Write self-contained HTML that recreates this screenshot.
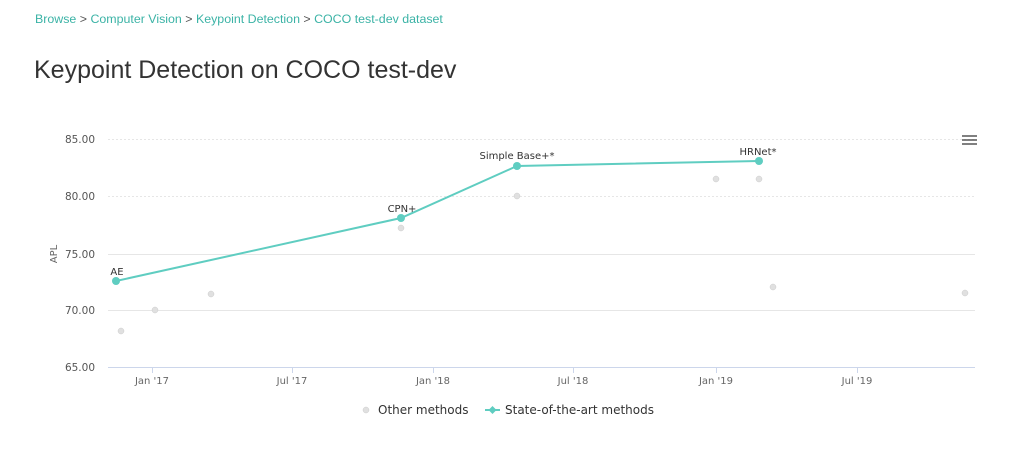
<!DOCTYPE html>
<html><head><meta charset="utf-8"><style>
html,body{margin:0;padding:0;background:#fff;width:1024px;height:449px;overflow:hidden;font-family:"Liberation Sans","DejaVu Sans",sans-serif}
.bc{position:absolute;left:35px;top:12px;font-size:12.4px;color:#555}
.bc a{color:#3bb3a6;text-decoration:none}
h1{position:absolute;left:34px;top:56px;margin:0;font-size:25px;font-weight:normal;color:#333}
svg{position:absolute;left:0;top:0}
</style></head><body>
<div class="bc"><a>Browse</a> &gt; <a>Computer Vision</a> &gt; <a>Keypoint Detection</a> &gt; <a>COCO test-dev dataset</a></div>
<h1>Keypoint Detection on COCO test-dev</h1>
<svg width="1024" height="449" font-family="DejaVu Sans, sans-serif">
<g stroke="#e6e6e6" stroke-width="1">
<line x1="108" y1="139.5" x2="975" y2="139.5" stroke-dasharray="2,2"/>
<line x1="108" y1="196.5" x2="975" y2="196.5" stroke-dasharray="2,2"/>
<line x1="108" y1="254.5" x2="975" y2="254.5"/>
<line x1="108" y1="310.5" x2="975" y2="310.5"/>
<line x1="108" y1="367.5" x2="975" y2="367.5" stroke="#ccd6eb"/>
</g>
<g stroke="#ccd6eb"><line x1="152.5" y1="367" x2="152.5" y2="373"/><line x1="292.5" y1="367" x2="292.5" y2="373"/><line x1="433.5" y1="367" x2="433.5" y2="373"/><line x1="573.5" y1="367" x2="573.5" y2="373"/><line x1="716.5" y1="367" x2="716.5" y2="373"/><line x1="857.5" y1="367" x2="857.5" y2="373"/></g>
<g font-size="10.5" fill="#555" text-anchor="end">
<text x="95" y="143">85.00</text><text x="95" y="200">80.00</text><text x="95" y="258">75.00</text><text x="95" y="314">70.00</text><text x="95" y="371">65.00</text>
</g>
<text x="0" y="0" font-size="10" fill="#666" text-anchor="middle" transform="translate(57,254) rotate(-90)">APL</text>
<g font-size="10" fill="#666" text-anchor="middle">
<text x="152" y="384">Jan '17</text><text x="292" y="384">Jul '17</text><text x="433" y="384">Jan '18</text><text x="573" y="384">Jul '18</text><text x="716" y="384">Jan '19</text><text x="857" y="384">Jul '19</text>
</g>
<g fill="#e0e0e0" stroke="#ccc" stroke-width="0.5">
<circle cx="121" cy="331" r="3"/><circle cx="155" cy="310" r="3"/><circle cx="211" cy="294" r="3"/><circle cx="401" cy="228" r="3"/><circle cx="517" cy="196" r="3"/><circle cx="716" cy="179" r="3"/><circle cx="759" cy="179" r="3"/><circle cx="773" cy="287" r="3"/><circle cx="965" cy="293" r="3"/>
</g>
<polyline points="116,281 401,218 517,166 759,161" fill="none" stroke="#5fcdc1" stroke-width="2"/>
<g fill="#5fcdc1"><circle cx="116" cy="281" r="4"/><circle cx="401" cy="218" r="4"/><circle cx="517" cy="166" r="4"/><circle cx="759" cy="161" r="4"/></g>
<g font-size="10" fill="#333" text-anchor="middle">
<text x="117" y="275">AE</text><text x="402" y="212">CPN+</text><text x="517" y="159">Simple Base+*</text><text x="758" y="155">HRNet*</text>
</g>
<g stroke="#555" stroke-width="1.5"><line x1="962" y1="136" x2="977" y2="136"/><line x1="962" y1="140" x2="977" y2="140"/><line x1="962" y1="144" x2="977" y2="144"/></g>
<circle cx="366" cy="410" r="3" fill="#e0e0e0" stroke="#ccc" stroke-width="0.5"/>
<text x="378" y="414" font-size="12" fill="#333">Other methods</text>
<line x1="485" y1="410" x2="500" y2="410" stroke="#5fcdc1" stroke-width="2"/>
<path d="M492.5 406 L496.5 410 L492.5 414 L488.5 410Z" fill="#5fcdc1"/>
<text x="505" y="414" font-size="12" fill="#333">State-of-the-art methods</text>
</svg>
</body></html>
